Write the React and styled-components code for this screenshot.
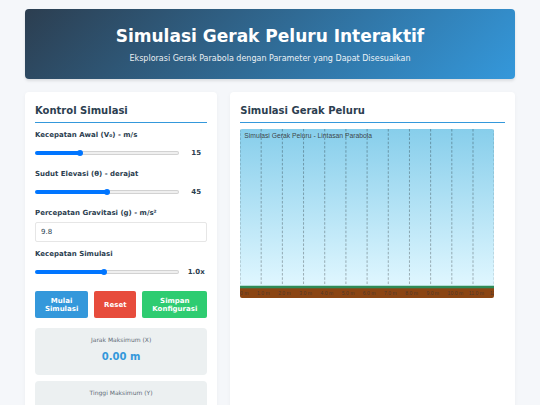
import React from "react";
import styled, { createGlobalStyle, ThemeProvider } from "styled-components";

const theme = {
  page: "#f5f7fa",
  dark: "#2c3e50",
  blue: "#3498db",
  red: "#e74c3c",
  green: "#2ecc71",
  panel: "#ecf0f1",
  muted: "#5f6c78",
};

const GRID_LINES = [0, 1, 2, 3, 4, 5, 6, 7, 8, 9, 10, 11, 12];

export default function App() {
  const [speed, setSpeed] = React.useState(15);
  const [angle, setAngle] = React.useState(45);
  const [gravity, setGravity] = React.useState("9.8");
  const [rate, setRate] = React.useState(1);

  const reset = () => {
    setSpeed(15);
    setAngle(45);
    setGravity("9.8");
    setRate(1);
  };

  return (
    <ThemeProvider theme={theme}>
      <GlobalStyle />
      <Container>
        <Header>
          <Title>Simulasi Gerak Peluru Interaktif</Title>
          <Subtitle>
            Eksplorasi Gerak Parabola dengan Parameter yang Dapat Disesuaikan
          </Subtitle>
        </Header>

        <Main>
          <Card>
            <CardTitle>Kontrol Simulasi</CardTitle>
            <SliderField
              id="speed"
              label="Kecepatan Awal (V₀) - m/s"
              min={0}
              max={50}
              step={1}
              value={speed}
              text={speed}
              onChange={setSpeed}
            />
            <SliderField
              id="angle"
              label="Sudut Elevasi (θ) - derajat"
              min={0}
              max={90}
              step={1}
              value={angle}
              text={angle}
              onChange={setAngle}
            />
            <Field>
              <Label htmlFor="gravity">Percepatan Gravitasi (g) - m/s²</Label>
              <TextInput
                id="gravity"
                value={gravity}
                onChange={(e) => setGravity(e.target.value)}
              />
            </Field>
            <SliderField
              id="rate"
              label="Kecepatan Simulasi"
              min={0.1}
              max={2}
              step={0.1}
              value={rate}
              text={rate.toFixed(1) + "x"}
              onChange={setRate}
            />

            <Buttons>
              <Button $color="blue">Mulai Simulasi</Button>
              <Button $color="red" onClick={reset}>Reset</Button>
              <Button $color="green">Simpan Konfigurasi</Button>
            </Buttons>

            <Results>
              <Result label="Jarak Maksimum (X)" value="0.00 m" />
              <Result label="Tinggi Maksimum (Y)" value="0.00 m" />
            </Results>
          </Card>

          <Card>
            <CardTitle>Simulasi Gerak Peluru</CardTitle>
            <Scene />
          </Card>
        </Main>
      </Container>
    </ThemeProvider>
  );
}

function SliderField({ id, label, text, value, min, max, step, onChange }) {
  const fill = ((value - min) / (max - min)) * 100;

  return (
    <Field>
      <Label htmlFor={id}>{label}</Label>
      <SliderRow>
        <Slider
          type="range"
          id={id}
          min={min}
          max={max}
          step={step}
          value={value}
          onChange={(e) => onChange(Number(e.target.value))}
          style={{ "--fill": fill + "%" }}
        />
        <SliderValue htmlFor={id}>{text}</SliderValue>
      </SliderRow>
    </Field>
  );
}

function Result({ label, value }) {
  return (
    <ResultBox>
      <ResultLabel>{label}</ResultLabel>
      <ResultValue>{value}</ResultValue>
    </ResultBox>
  );
}

// 50 units of the drawing are one metre
function Scene() {
  return (
    <SceneSvg viewBox="0 0 600 400" role="img">
      <defs>
        <linearGradient id="sky" x1="0" y1="0" x2="0" y2="1">
          <stop offset="0" stopColor="#87ceeb" />
          <stop offset="1" stopColor="#e0f7ff" />
        </linearGradient>
      </defs>
      <rect width="600" height="372" fill="url(#sky)" />
      <rect y="375" width="600" height="25" fill="#8b4513" />
      <rect y="370" width="600" height="6" fill="#2e8b57" />
      {GRID_LINES.map((n) => (
        <g key={n}>
          <line
            x1={n * 50}
            y1="0"
            x2={n * 50}
            y2="370"
            stroke="#000"
            strokeOpacity="0.35"
            strokeWidth="2"
            strokeDasharray="6 4"
          />
          <text x={n * 50 - 10} y="391" fontSize="12" fill="#333" fillOpacity="0.7">
            {n.toFixed(1)} m
          </text>
        </g>
      ))}
      <text x="10" y="21" fontSize="16" fill="#333" fillOpacity="0.9">
        Simulasi Gerak Peluru - Lintasan Parabola
      </text>
    </SceneSvg>
  );
}

// ______________________________________ STYLED COMPONENTS
const GlobalStyle = createGlobalStyle`
  * {
    box-sizing: border-box;
    margin: 0;
    padding: 0;
  }

  body {
    font-family: "DejaVu Sans", Verdana, sans-serif;
    font-size: 7px;
    color: ${theme.dark};
    background-color: ${theme.page};
    overflow-x: hidden;
    scrollbar-width: none;
  }
`

const Container = styled.div`
  padding: 9px 25px;
`

const Header = styled.header`
  padding: 16px 13px 14px;
  margin-bottom: 13px;
  text-align: center;
  color: white;
  background: linear-gradient(135deg, ${(p) => p.theme.dark}, ${(p) => p.theme.blue});
  border-radius: 4px;
  box-shadow: 0 2px 3px rgba(0, 0, 0, 0.1);
`

const Title = styled.h1`
  margin-bottom: 6px;
  font-size: 17px;
  line-height: 22px;
`

const Subtitle = styled.p`
  font-size: 8px;
  line-height: 12px;
  opacity: 0.9;
`

const Main = styled.main`
  display: grid;
  grid-template-columns: minmax(0, 27fr) minmax(0, 40fr);
  gap: 13px;
`

const Card = styled.section`
  padding: 10px;
  background-color: white;
  border-radius: 4px;
  box-shadow: 0 1px 4px rgba(0, 0, 0, 0.04);
`

const CardTitle = styled.h2`
  padding-bottom: 2px;
  margin-bottom: 6px;
  font-size: 10px;
  line-height: 18px;
  border-bottom: 1px solid ${(p) => p.theme.blue};
`

const Field = styled.div`
  display: flex;
  flex-direction: column;
  gap: 3px;
  margin-bottom: 6px;
`

const Label = styled.label`
  font-size: 7px;
  font-weight: bold;
  line-height: 12px;
`

const SliderRow = styled.div`
  display: flex;
  align-items: center;
  gap: 6px;
  height: 18px;
`

const Slider = styled.input`
  appearance: none;
  flex: 1;
  min-width: 0;
  height: 4px;
  border: 1px solid transparent;
  border-radius: 2px;
  background:
    linear-gradient(#0075ff, #0075ff) 0 0 / var(--fill) 100% no-repeat border-box,
    linear-gradient(#efefef, #efefef) padding-box,
    linear-gradient(#d2d2d2, #d2d2d2) border-box;

  &::-webkit-slider-thumb {
    appearance: none;
    width: 6px;
    height: 6px;
    border-radius: 50%;
    background-color: #0075ff;
  }
`

const SliderValue = styled.output`
  width: 22px;
  font-size: 7px;
  font-weight: bold;
  text-align: center;
`

const TextInput = styled.input`
  width: 100%;
  height: 20px;
  padding: 0 5px;
  font-family: inherit;
  font-size: 7px;
  color: ${(p) => p.theme.dark};
  background-color: white;
  border: 1px solid #e6e6e6;
  border-radius: 2px;
`

const Buttons = styled.div`
  display: flex;
  gap: 6px;
  margin: 10px 0;
`

const Button = styled.button`
  flex: 1 1 auto;
  width: min-content;
  padding: 6px 9px 5px;
  font-family: inherit;
  font-size: 7px;
  font-weight: bold;
  line-height: 8px;
  color: white;
  background-color: ${(p) => p.theme[p.$color]};
  border: none;
  border-radius: 2px;
  cursor: pointer;
`

const Results = styled.div`
  display: flex;
  flex-direction: column;
  gap: 6px;
`

const ResultBox = styled.div`
  padding: 6px 6px 10px;
  text-align: center;
  background-color: ${(p) => p.theme.panel};
  border-radius: 4px;
`

const ResultLabel = styled.div`
  margin-bottom: 3px;
  font-size: 6px;
  line-height: 12px;
  color: ${(p) => p.theme.muted};
`

const ResultValue = styled.div`
  font-size: 10px;
  font-weight: bold;
  line-height: 16px;
  color: ${(p) => p.theme.blue};
`

const SceneSvg = styled.svg`
  display: block;
  width: 96%;
  font-family: "Liberation Sans", Arial, sans-serif;
  border-radius: 2px;
`
